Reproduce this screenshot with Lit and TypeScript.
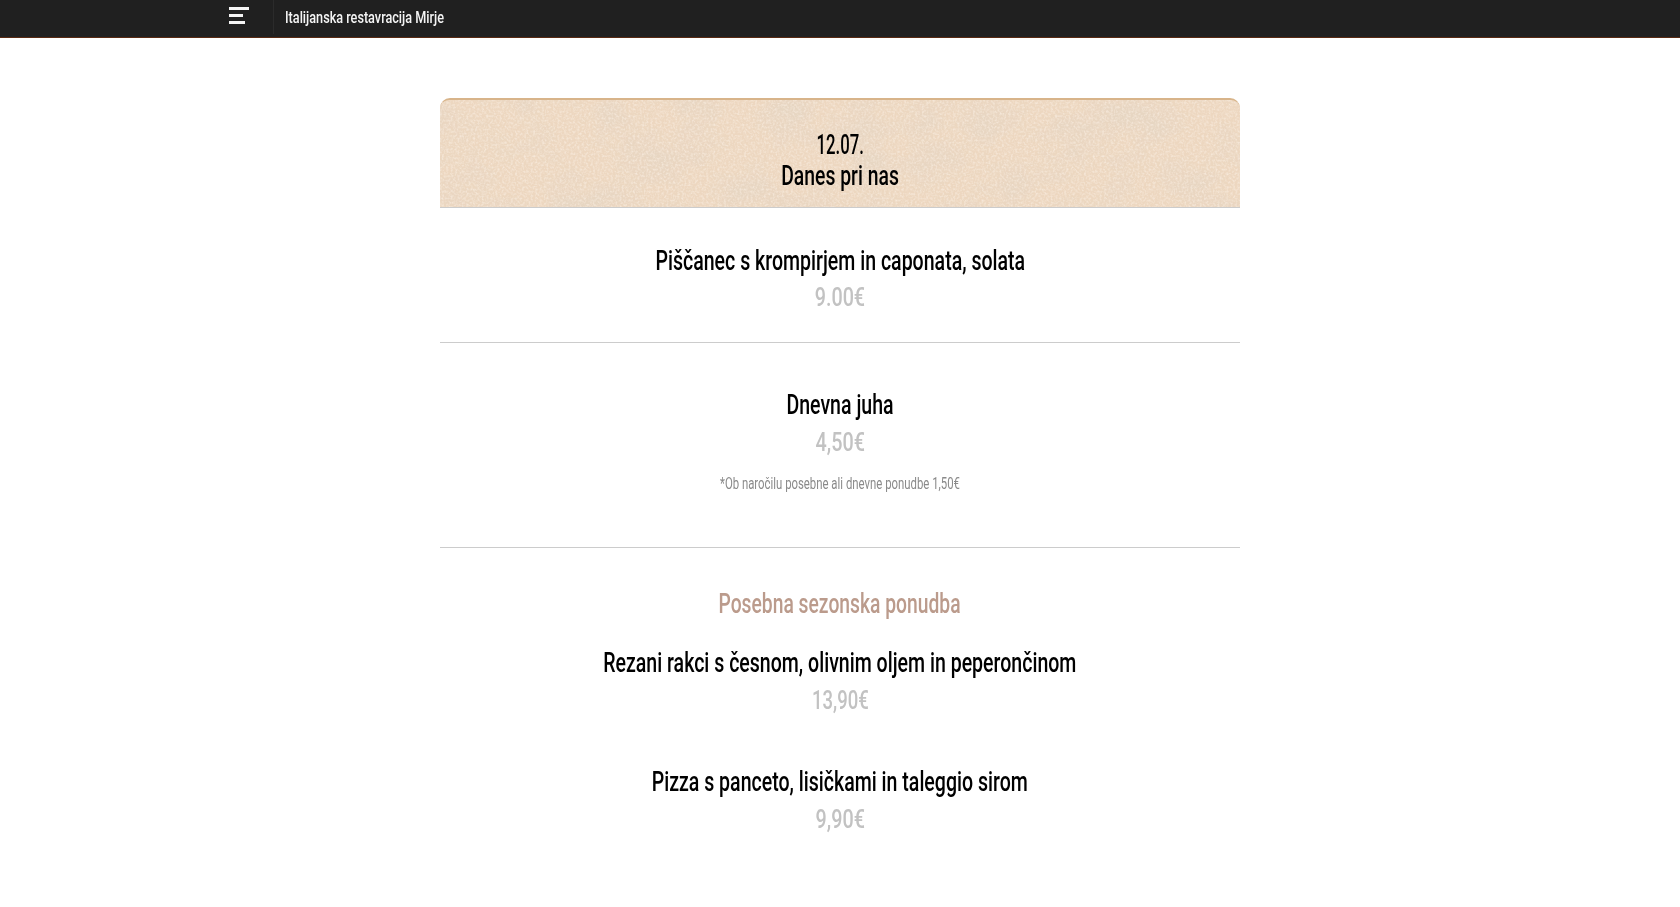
import { LitElement, html, css, svg } from "lit";
import { customElement } from "lit/decorators.js";

const paper = svg`<svg class="tex" width="100%" height="100%" aria-hidden="true">
  <filter id="coarse" x="0" y="0" width="100%" height="100%">
    <feTurbulence type="fractalNoise" baseFrequency="0.018 0.024" numOctaves="5" seed="21"/>
    <feColorMatrix values="0 0 0 0 0.80  0 0 0 0 0.67  0 0 0 0 0.54  2.6 0 0 0 -1.05"/>
  </filter>
  <filter id="fine" x="0" y="0" width="100%" height="100%">
    <feTurbulence type="fractalNoise" baseFrequency="0.45" numOctaves="2" seed="3"/>
    <feColorMatrix values="0 0 0 0 0.96  0 0 0 0 0.87  0 0 0 0 0.78  1.4 0 0 0 -0.56"/>
  </filter>
  <rect width="100%" height="100%" filter="url(#coarse)"/>
  <rect width="100%" height="100%" filter="url(#fine)"/>
</svg>`;

@customElement("app-root")
export class AppRoot extends LitElement {
  static styles = css`
    :host { display: block; min-height: 907px; background: #fff; font-family: Roboto, "Liberation Sans", sans-serif; color: #000; }
    .t { display: inline-block; white-space: nowrap; transform: scaleX(var(--k)); }
    .bar { height: 37px; background: #202020; border-bottom: 1px solid #5a2a12; display: flex; padding-left: 205px; }
    .burger { width: 69px; height: 34px; border-right: 1px solid #2b2b2b; box-sizing: border-box; display: flex; justify-content: center; }
    .burger svg { margin-top: 7px; }
    .brand { margin-left: 11px; font-size: 17px; line-height: 34px; color: #f4f4f4; font-weight: 500; --k: 0.745; transform-origin: left center; }
    .wrap { width: 800px; margin: 60px auto 0; text-align: center; }
    .panel { position: relative; height: 110px; box-sizing: border-box; background: #edd7c0; border-top: 2px solid #d8b48a; border-radius: 10px 10px 0 0; border-bottom: 1px solid #ccc; overflow: hidden; }
    .tex { position: absolute; inset: 0; }
    .panel-text { position: relative; padding-top: 30px; font-size: 27px; line-height: 31px; font-weight: 500; --k: 0.717; }
    .date { --k: 0.62; }
    .name { font-size: 27px; line-height: 37px; font-weight: 500; --k: 0.724; }
    .price { font-size: 25px; line-height: 37px; color: #c2c2c2; font-weight: 500; --k: 0.79; }
    .price.wide { --k: 0.74; }
    .note { font-size: 16px; line-height: 20px; color: #8a8a8a; margin-top: 13px; --k: 0.71; }
    .sec { font-size: 27px; line-height: 36px; color: #bb9b8c; font-weight: 500; --k: 0.714; }
    hr { border: 0; border-top: 1px solid #ccc; margin: 0; }
    .a { padding-top: 35px; height: 134px; box-sizing: border-box; }
    .a .name { line-height: 36px; }
    .b { padding-top: 44px; height: 204px; box-sizing: border-box; }
    .c { padding-top: 38px; }
    .d { margin-top: 23px; }
    .e { margin-top: 45px; }
  `;

  render() {
    return html`
      <div class="bar">
        <div class="burger">
          <svg width="20" height="17" viewBox="0 0 20 17"><path fill="#f4f4f4" d="M0 0h20v3H0zM0 7h14v3H0zM0 14h16v3H0z"/></svg>
        </div>
        <div class="brand t">Italijanska restavracija Mirje</div>
      </div>
      <main class="wrap">
        <div class="panel">${paper}<div class="panel-text"><span class="t date">12.07.</span><br /><span class="t">Danes pri nas</span></div></div>
        <section class="a"><div class="name"><span class="t">Piščanec s krompirjem in caponata, solata</span></div><div class="price"><span class="t">9.00€</span></div></section>
        <hr />
        <section class="b"><div class="name"><span class="t">Dnevna juha</span></div><div class="price"><span class="t">4,50€</span></div><div class="note"><span class="t">*Ob naročilu posebne ali dnevne ponudbe 1,50€</span></div></section>
        <hr />
        <section class="c">
          <div class="sec"><span class="t">Posebna sezonska ponudba</span></div>
          <div class="d"><div class="name"><span class="t">Rezani rakci s česnom, olivnim oljem in peperončinom</span></div><div class="price wide"><span class="t">13,90€</span></div></div>
          <div class="e"><div class="name"><span class="t">Pizza s panceto, lisičkami in taleggio sirom</span></div><div class="price"><span class="t">9,90€</span></div></div>
        </section>
      </main>
    `;
  }
}
